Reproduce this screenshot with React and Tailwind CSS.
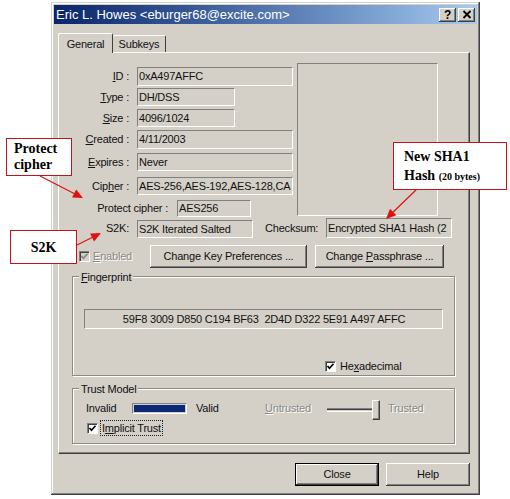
import React from "react";

const ui = { fontFamily: '"Liberation Sans", Arial, sans-serif' };
const serif = { fontFamily: '"Liberation Serif", "Times New Roman", serif' };

const sunken = "border border-t-[#808080] border-l-[#808080] border-b-white border-r-white";
const raised =
  "border border-t-white border-l-white border-r-[#404040] border-b-[#404040] shadow-[inset_-1px_-1px_0_#808080]";
const etched = "border border-[#8c8a84] shadow-[inset_1px_1px_0_#ffffff,1px_1px_0_#ffffff]";
const disabledText = "text-[#8a8884] [text-shadow:1px_1px_0_#ffffff]";

const Field = ({ cls, children, center }) => (
  <div
    className={`flex items-center overflow-hidden whitespace-nowrap pl-[1px] ${sunken} ${cls} ${
      center ? "justify-center" : ""
    }`}
  >
    {children}
  </div>
);

const Check = ({ disabled }) => (
  <span
    className={`flex h-[11px] w-[11px] shrink-0 items-center justify-center ${sunken} shadow-[inset_1px_1px_0_#404040] ${
      disabled ? "bg-[#d4d0c8]" : "bg-white"
    }`}
  >
    <svg viewBox="0 0 9 9" className="h-[9px] w-[9px]">
      <path
        d="M1.5 4 L3.5 6.2 L7.5 1.8"
        stroke={disabled ? "#8a8884" : "#000"}
        strokeWidth="1.7"
        fill="none"
      />
    </svg>
  </span>
);

const Btn = ({ cls, children, def }) => (
  <div
    className={`flex items-center justify-center whitespace-nowrap ${
      def
        ? "border border-black shadow-[inset_-1px_-1px_0_#404040,inset_1px_1px_0_#ffffff,inset_-2px_-2px_0_#808080]"
        : "shadow-[inset_-1px_-1px_0_#404040,inset_1px_1px_0_#ffffff,inset_-2px_-2px_0_#808080]"
    } ${cls}`}
  >
    {children}
  </div>
);

const rows = [
  { label: <><u>I</u>D :</>, value: "0xA497AFFC", cls: "h-[19px]", fw: "w-[156px]" },
  { label: <><u>T</u>ype :</>, value: "DH/DSS", cls: "mt-[2px] h-[18px]", fw: "w-[98px]" },
  { label: <><u>S</u>ize :</>, value: "4096/1024", cls: "mt-[3px] h-[18px]", fw: "w-[98px]" },
  { label: <><u>C</u>reated :</>, value: "4/11/2003", cls: "mt-[3px] h-[19px]", fw: "w-[156px]" },
  { label: <><u>E</u>xpires :</>, value: "Never", cls: "mt-[4px] h-[18px]", fw: "w-[156px]" },
  { label: <>Cip<u>h</u>er :</>, value: "AES-256,AES-192,AES-128,CA", cls: "mt-[6px] h-[18px]", fw: "w-[156px]" },
];

const Arrow = ({ x1, y1, x2, y2 }) => {
  const dx = x2 - x1;
  const dy = y2 - y1;
  const len = Math.hypot(dx, dy);
  const ux = dx / len;
  const uy = dy / len;
  const bx = x2 - ux * 10;
  const by = y2 - uy * 10;
  const pts = `${x2},${y2} ${bx - uy * 4.5},${by + ux * 4.5} ${bx + uy * 4.5},${by - ux * 4.5}`;
  return (
    <g>
      <line x1={x1} y1={y1} x2={bx} y2={by} stroke="#e01010" strokeWidth="1.2" />
      <polygon points={pts} fill="#e01010" />
    </g>
  );
};

export default function App() {
  return (
    <div className="relative h-[499px] w-[510px] overflow-hidden bg-white pl-[51px] pt-[2px] text-[11px] tracking-[-0.2px] text-[#111]" style={ui}>
      {/* window */}
      <div className="flex h-[493px] w-[429px] flex-col bg-[#d4d0c8] p-[3px] shadow-[inset_-1px_-1px_0_#404040,inset_1px_1px_0_#d4d0c8,inset_-2px_-2px_0_#808080,inset_2px_2px_0_#ffffff]">
        <div className="flex h-[19px] items-center bg-gradient-to-r from-[#0a246a] to-[#a6caf0] pl-[2px] pr-[2px]">
          <span className="text-[13px] tracking-normal text-white">Eric L. Howes &lt;eburger68@excite.com&gt;</span>
          <div className="ml-auto flex gap-[2px]">
            <Btn cls="h-[14px] w-[17px] bg-[#d4d0c8] text-[12px] font-bold text-black">?</Btn>
            <Btn cls="h-[14px] w-[17px] bg-[#d4d0c8]">
              <svg viewBox="0 0 10 9" className="h-[9px] w-[10px]">
                <path d="M1.5 1 L8.5 8 M8.5 1 L1.5 8" stroke="#000" strokeWidth="1.8" />
              </svg>
            </Btn>
          </div>
        </div>

        {/* tabs */}
        <div className="ml-[4px] mt-[9px] flex items-end">
          <div className="relative z-10 -mb-[1px] flex h-[20px] w-[55px] items-center justify-center rounded-t-[2px] border-l border-t border-r border-l-white border-t-white border-r-[#404040] bg-[#d4d0c8] pt-[1px]">
            General
          </div>
          <div className="flex h-[17px] w-[53px] items-center justify-center rounded-t-[2px] border-t border-r border-t-white border-r-[#404040]">
            Subkeys
          </div>
        </div>

        {/* panel */}
        <div className={`ml-[4px] h-[402px] w-[412px] pt-[10px] ${raised}`}>
          <div className="flex">
            <div className="w-[234px] pt-[4px]">
              {rows.map((r, i) => (
                <div key={i} className={`flex items-center ${r.cls}`}>
                  <div className="w-[70px] text-right">{r.label}</div>
                  <Field cls={`ml-[8px] h-full ${r.fw}`}>{r.value}</Field>
                </div>
              ))}
              <div className="mt-[5px] flex h-[17px] items-center">
                <div className="w-[114px] pr-[5px] text-right">Protect cipher :</div>
                <Field cls="ml-[4px] h-full w-[74px]">AES256</Field>
              </div>
            </div>
            <div className={`ml-[4px] h-[153px] w-[141px] ${sunken}`} />
          </div>

          <div className="mt-[1px] flex h-[20px] items-center">
            <div className="w-[70px] text-right">S2K:</div>
            <Field cls="ml-[8px] h-[18px] w-[116px] self-end">S2K Iterated Salted</Field>
            <div className="ml-[9px] w-[64px] pl-[3px]">Checksum:</div>
            <Field cls="h-[20px] w-[126px]">Encrypted SHA1 Hash (2</Field>
          </div>

          <div className="mt-[7px] flex h-[23px] items-center pl-[20px]">
            <Check disabled />
            <span className={`ml-[3px] w-[57px] ${disabledText}`}>
              <u>E</u>nabled
            </span>
            <Btn cls="h-[23px] w-[157px]">Change Key Preferences ...</Btn>
            <Btn cls="ml-[8px] h-[23px] w-[129px]">
              <span>
                Change <u>P</u>assphrase ...
              </span>
            </Btn>
          </div>

          {/* fingerprint */}
          <div className={`relative ml-[13px] mt-[8px] h-[100px] w-[383px] ${etched}`}>
            <span className="absolute -top-[8px] left-[6px] bg-[#d4d0c8] px-[2px]">
              <u>F</u>ingerprint
            </span>
            <Field center cls="ml-[11px] mt-[32px] h-[20px] w-[359px]">
              59F8 3009 D850 C194 BF63&nbsp;&nbsp;2D4D D322 5E91 A497 AFFC
            </Field>
            <div className="ml-[252px] mt-[30px] flex h-[14px] items-center">
              <Check />
              <span className="ml-[4px]">
                He<u>x</u>adecimal
              </span>
            </div>
          </div>

          {/* trust model */}
          <div className={`relative ml-[13px] mt-[12px] h-[56px] w-[383px] ${etched}`}>
            <span className="absolute -top-[8px] left-[6px] bg-[#d4d0c8] px-[2px]">Trust Model</span>
            <div className="mt-[9px] flex h-[20px] items-center">
              <span className="ml-[13px] w-[46px]">Invalid</span>
              <div className={`h-[11px] w-[55px] p-[1px] ${sunken}`}>
                <div className="h-full w-full bg-[#0a2a78]" />
              </div>
              <span className="ml-[9px] w-[69px]">Valid</span>
              <span className={`w-[62px] ${disabledText}`}>
                <u>U</u>ntrusted
              </span>
              <div className="flex h-[20px] w-[53px] items-center pt-[3px]">
                <div className="h-[4px] w-[45px] border-t border-b border-t-[#808080] border-b-white shadow-[inset_0_1px_0_#404040]" />
                <div className={`h-[20px] w-[8px] ${raised}`} />
              </div>
              <span className={`ml-[8px] ${disabledText}`}>Trusted</span>
            </div>
            <div className="mt-[2px] flex h-[16px] items-center pl-[14px]">
              <Check />
              <span className="ml-[2px] flex h-[16px] items-center border border-dotted border-[#222] px-[1px]">
                I<u>m</u>plicit Trust
              </span>
            </div>
          </div>
        </div>

        {/* buttons */}
        <div className="mt-[9px] flex justify-end gap-[7px] pr-[7px]">
          <Btn def cls="h-[23px] w-[84px]">Close</Btn>
          <Btn cls="h-[23px] w-[84px]">Help</Btn>
        </div>
      </div>

      {/* annotations */}
      <div className="absolute left-[6px] top-[138px] flex h-[38px] w-[66px] flex-col justify-center border border-[#c0141c] bg-white pl-[7px] text-[14px] font-bold leading-[16px] tracking-normal text-black" style={serif}>
        <span>Protect</span>
        <span>cipher</span>
      </div>
      <div className="absolute left-[10px] top-[230px] flex h-[34px] w-[67px] items-center justify-center border border-[#c0141c] bg-white text-[14px] font-bold tracking-normal text-black" style={serif}>
        S2K
      </div>
      <div className="absolute left-[393px] top-[142px] flex h-[48px] w-[114px] flex-col justify-center border border-[#c0141c] bg-white pl-[10px] text-[14px] font-bold leading-[19px] tracking-normal text-black" style={serif}>
        <span>New SHA1</span>
        <span>
          Hash <span className="text-[10px]">(20 bytes)</span>
        </span>
      </div>
      <svg className="pointer-events-none absolute left-0 top-0 h-[499px] w-[510px]" viewBox="0 0 510 499">
        <Arrow x1={40} y1={176} x2={83} y2={198} />
        <Arrow x1={77} y1={245} x2={101} y2={233} />
        <Arrow x1={416} y1={190} x2={386} y2={219} />
      </svg>
    </div>
  );
}
